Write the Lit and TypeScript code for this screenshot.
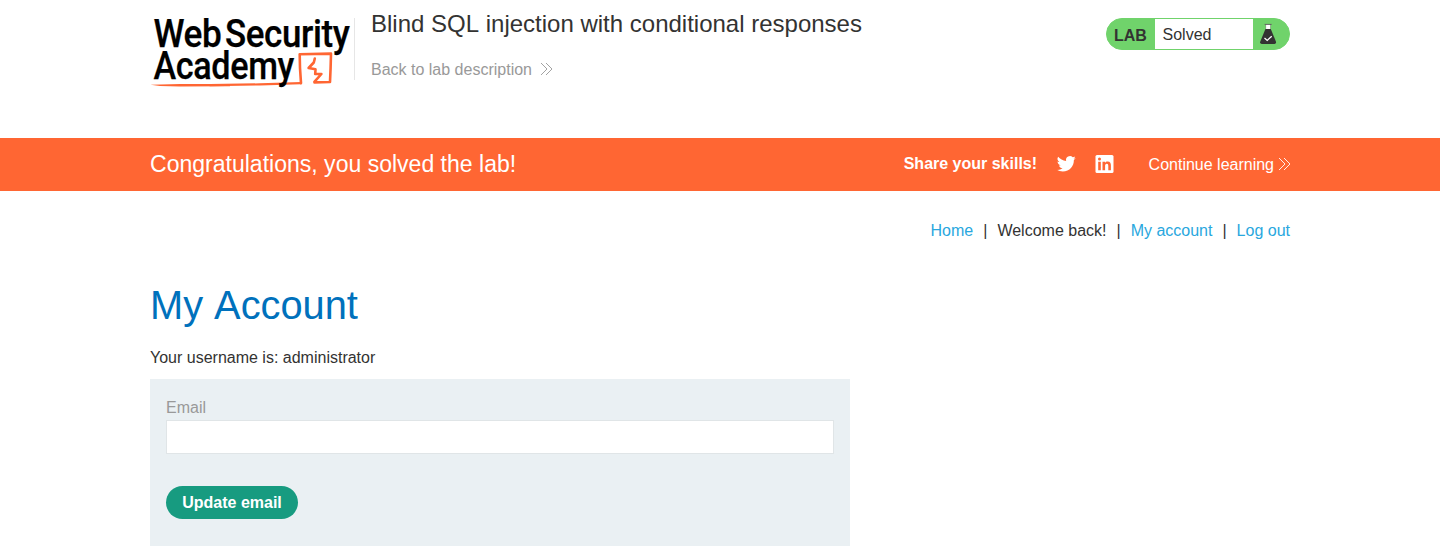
import { LitElement, html, css, svg } from "lit";
import { customElement } from "lit/decorators.js";

const chevrons = html`<svg class="chev" viewBox="0 0 14 14" width="14" height="14" fill="none" stroke="currentColor" stroke-width=".9">
  <path d="M1 1 L7 7 L1 13 M6 1 L12 7 L6 13"/>
</svg>`;

const words: [string, number, number, number][] = [
  ["Web", 3.5, 46.5, 68],
  ["Security", 75, 46.5, 124.5],
  ["Academy", 3.5, 79, 140.5],
];

@customElement("academy-logo")
export class AcademyLogo extends LitElement {
  static styles = css`
    :host { display: block; width: 204px; height: 90px; }
    svg { display: block; overflow: visible; }
    .word { font-family: Roboto, sans-serif; font-weight: 500; font-size: 38px; letter-spacing: -0.4px; fill: #000; stroke: #000; stroke-width: .25px; }
  `;
  render() {
    return html`<svg width="204" height="90" viewBox="0 0 204 90">
      <g fill="none" stroke="#ff6633" stroke-linejoin="round" stroke-linecap="round">
        <path stroke-width="2.2" d="M60 85.2 L110 84.4 L151 83.2"/>
        <path stroke-width="2.6" d="M151 83.2 L150 68 L149.7 54.2 L181 53.6 L180.6 68 L180 82 L164.5 82.4"/>
        <path stroke-width="2.6" d="M164.8 58.5 L163.8 62.5 L158.6 68 L165.5 69.3 L165.2 74 L171.4 74 L164.6 81.6"/>
      </g>
      <path fill="#ff6633" d="M0.5 84.8 L30 84 L80 84 L80 86.2 L30 86.4 L10 86 Z"/>
      ${words.map(([w, x, y, len]) => svg`<text class="word" x=${x} y=${y} textLength=${len} lengthAdjust="spacingAndGlyphs">${w}</text>`)}
    </svg>`;
  }
}

@customElement("app-root")
export class AppRoot extends LitElement {
  static styles = css`
    :host {
      display: block; height: 546px; overflow: hidden; background: #fff; color: #333332;
      font: 16px/20px "Liberation Sans", Arial, sans-serif;
    }
    * { box-sizing: border-box; }
    a { text-decoration: none; color: inherit; }
    .wrap { width: 1140px; margin: 0 auto; display: flex; }
    .top { height: 138px; align-items: flex-start; }
    .titles { margin-top: 18px; height: 62px; border-left: 1px solid #e6e6e6; padding-left: 16px; }
    .title { margin: -10px 0 0; font-size: 24px; line-height: 32px; font-weight: 400; white-space: nowrap; font-kerning: none; }
    .back { display: flex; align-items: center; margin-top: 20px; color: #999; gap: 8px; }
    .chev { display: block; }
    .back .chev { margin-top: -2px; }
    .status { display: flex; margin: 18px 0 0 auto; width: 184px; height: 32px; border-radius: 16px; border: 1px solid #70d36b; background: #70d36b; overflow: hidden; }
    .lab { width: 48px; padding: 7px 0 0 7px; font-weight: 700; }
    .solved { width: 98px; background: #fff; padding: 6px 0 0 7.5px; }
    .flask { display: block; margin: 4px 0 0 6px; }
    .banner { background: #ff6633; color: #fff; height: 53px; }
    .banner .wrap { height: 53px; align-items: center; }
    .congrats { margin: 0; font-size: 23.04px; line-height: 28px; font-weight: 400; padding-bottom: 2px; }
    .share { margin-left: auto; font-weight: 700; padding-bottom: 2px; }
    .tw { margin-left: 18.5px; margin-top: -1px; display: block; }
    .li { margin-left: 18px; margin-top: -1px; display: block; }
    .continue { display: flex; align-items: center; margin-left: 34px; gap: 4px; margin-right: -2px; }
    .continue .chev { margin-top: -1px; }
    .links { justify-content: flex-end; padding-top: 30px; gap: 10px; }
    .links a { color: #29a7de; }
    .page { flex-direction: column; }
    .heading { margin: 40px 0 0; color: #0071bc; font-size: 39.81px; line-height: 48px; font-weight: 400; font-kerning: none; }
    .user { margin: 19px 0 0; }
    .form { width: 700px; height: 220px; margin-top: 11px; background: #eaf0f3; padding: 19px 16px; }
    .label { display: block; color: #999; }
    .input { display: block; width: 668px; height: 34px; margin-top: 2px; border: 1px solid #e0e5e7; background: #fff; border-radius: 0; outline: 0; padding: 4px 8px; font: inherit; }
    .button { margin-top: 32px; width: 132px; height: 33px; border: 0; border-radius: 17px; background: #179b80; color: #fff; font: 700 16px/20px "Liberation Sans", Arial, sans-serif; padding: 0; }
  `;

  render() {
    return html`
      <header class="wrap top">
        <academy-logo></academy-logo>
        <div class="titles">
          <h2 class="title">Blind SQL injection with conditional responses</h2>
          <a class="back" href="#"><span>Back to lab description</span>${chevrons}</a>
        </div>
        <div class="status">
          <span class="lab">LAB</span>
          <span class="solved">Solved</span>
          <svg class="flask" width="18" height="22" viewBox="0 0 18 22">
            <path d="M6.8 1.5 H11.5 V7 H6.8 Z" fill="#fff"/>
            <path d="M5.6 1.4 H12.7" stroke="#666" stroke-width="1"/>
            <path d="M6.7 1.5 V6 M11.5 1.5 V6" stroke="#333332" stroke-width=".3"/>
            <path d="M6.4 6 H11.8 L17 18.7 Q17.3 20.8 15.5 21 H2.8 Q.8 20.8 1.2 18.7 Z" fill="#333332"/>
            <path d="M5.5 15 L8.2 17.4 L12.7 13.2" fill="none" stroke="#fff" stroke-width="1.3"/>
          </svg>
        </div>
      </header>
      <section class="banner">
        <div class="wrap">
          <h4 class="congrats">Congratulations, you solved the lab!</h4>
          <span class="share">Share your skills!</span>
          <svg class="tw" width="20" height="20" viewBox="0 0 24 24" fill="#fff">
            <path d="M23.2 4.9c-.8.4-1.7.6-2.6.7 1-.6 1.6-1.4 2-2.5-.9.5-1.9.9-2.9 1.1A4.6 4.6 0 0 0 11.9 8.4C8.1 8.2 4.7 6.4 2.5 3.6a4.6 4.6 0 0 0 1.4 6.1c-.7 0-1.4-.2-2.1-.6v.1c0 2.2 1.6 4.1 3.7 4.5-.7.2-1.4.2-2.1.1.6 1.8 2.3 3.2 4.3 3.2A9.2 9.2 0 0 1 .9 18.9a13 13 0 0 0 7 2.1c8.5 0 13.1-7 13.1-13.1v-.6c.9-.7 1.7-1.5 2.2-2.4z"
              transform="translate(0 -.3) scale(1.02)"/>
          </svg>
          <svg class="li" width="21" height="20" viewBox="0 0 21 20">
            <rect x="1.5" y="1" width="18" height="18" rx="1.5" fill="#fff"/>
            <g fill="#ff6633">
              <circle cx="5.5" cy="4.9" r="1.5"/>
              <path d="M4.2 7.7H6.8V16.3H4.2z M8.5 7.7H11V8.9C11.5 8 12.5 7.5 13.7 7.5C16.3 7.5 16.9 9.2 16.9 11.5V16.3H14.3V12C14.3 10.9 14.2 9.7 12.8 9.7S11.1 10.8 11.1 12V16.3H8.5z"/>
            </g>
          </svg>
          <a class="continue" href="#"><span>Continue learning</span>${chevrons}</a>
        </div>
      </section>
      <nav class="wrap links">
        <a href="#">Home</a><span>|</span><span>Welcome back!</span><span>|</span><a href="#">My account</a><span>|</span><a href="#">Log out</a>
      </nav>
      <main class="wrap page">
        <h1 class="heading">My Account</h1>
        <p class="user">Your username is: administrator</p>
        <div class="form">
          <label class="label" for="email">Email</label>
          <input class="input" id="email" type="email" />
          <button class="button">Update email</button>
        </div>
      </main>
    `;
  }
}
